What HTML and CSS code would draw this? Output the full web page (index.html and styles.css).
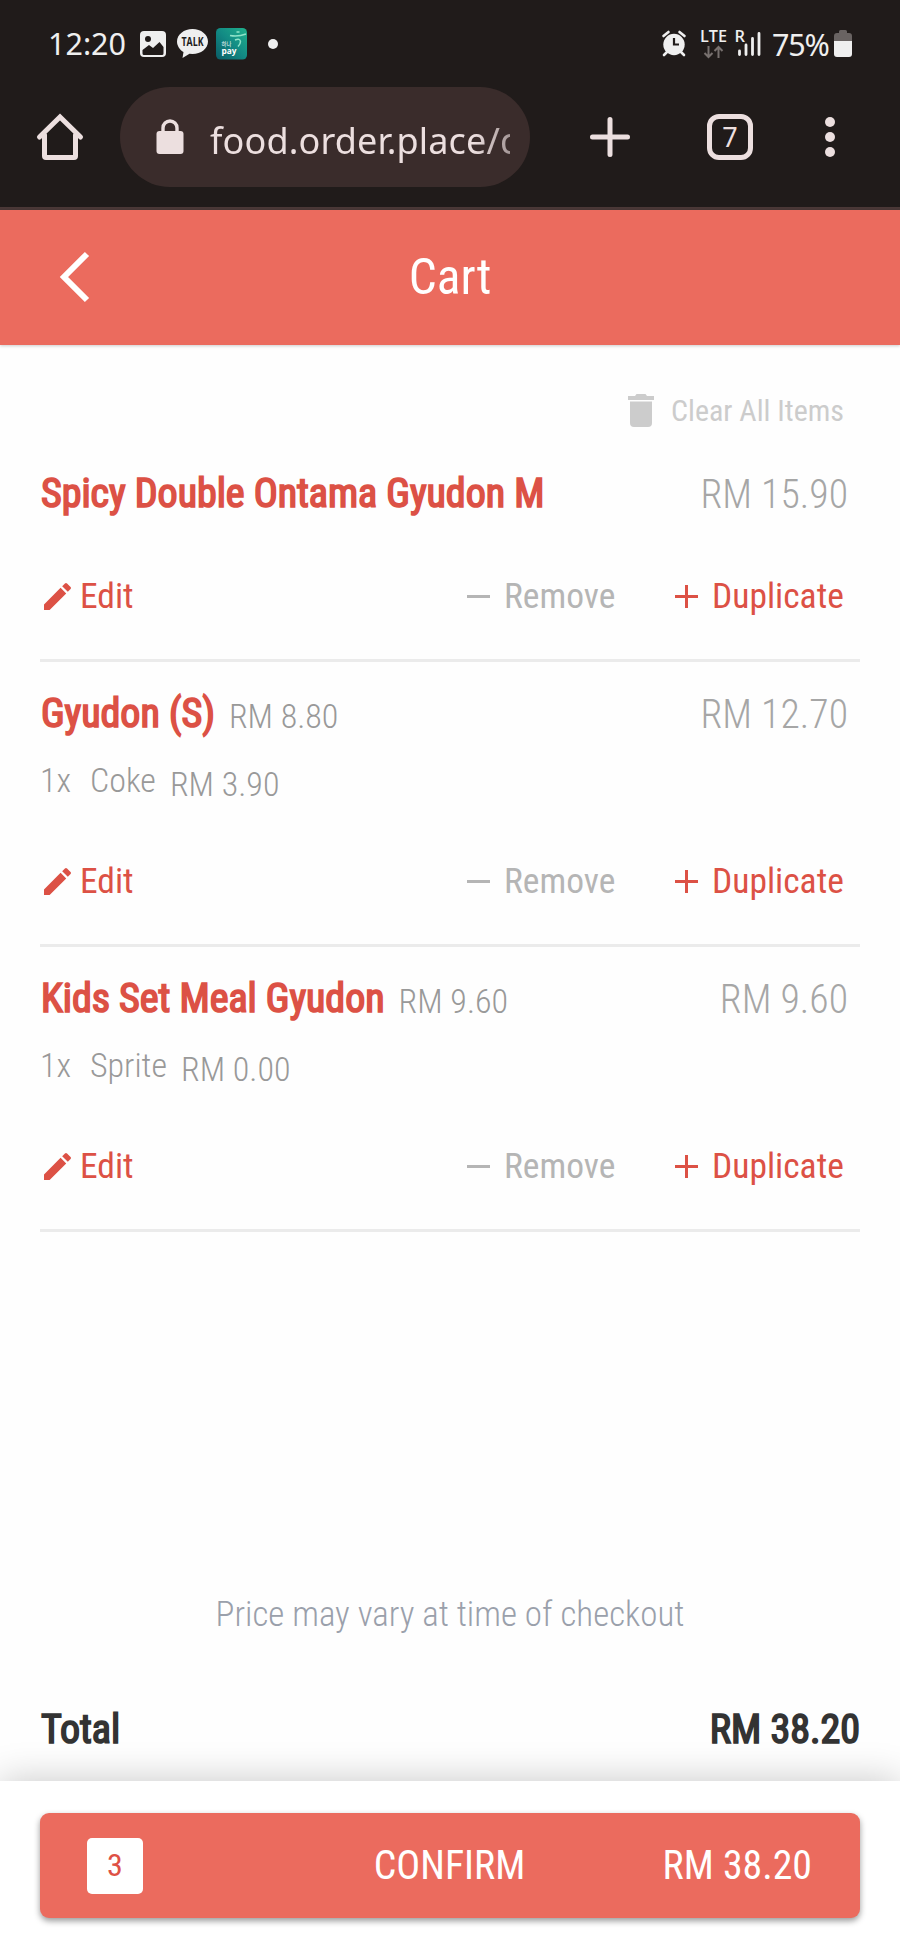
FILE: index.html
```html
<!DOCTYPE html>
<html lang="en">
<head>
<meta charset="utf-8">
<title>Cart</title>
<link rel="stylesheet" href="styles.css">
</head>
<body>
<div class="chrome">
  <div class="status">
    <span class="clock">12:20</span>
    <svg class="ic-photo" width="26" height="26" viewBox="0 0 26 26"><rect width="26" height="26" rx="4" fill="#efefef"/><circle cx="8" cy="8" r="3" fill="#201b1a"/><path d="M2.500 19l6.500-5 4 3 6.500-6 4 5v6.500a1.500 1.500 0 0 1-1.500 1.500H4a1.500 1.500 0 0 1-1.500-1.500z" fill="#201b1a"/></svg>
    <svg class="ic-talk" width="31" height="30" viewBox="0 0 31 30"><path d="M15.500 0C7 0 0 5.500 0 12.500c0 4.600 3 8.500 6.500 10.500L5.500 29l7-4.200 3 .2C24 25 31 19.500 31 12.500S24 0 15.500 0z" fill="#efefef"/><text x="4.500" y="17" textLength="22" lengthAdjust="spacingAndGlyphs" font-size="11.500" font-weight="700" fill="#201b1a">TALK</text></svg>
    <svg class="ic-pay" width="31" height="32" viewBox="0 0 31 32"><defs><linearGradient id="pay" x1="0" y1="1" x2="1" y2="0"><stop offset="0" stop-color="#0a5c66"/><stop offset=".5" stop-color="#128a84"/><stop offset="1" stop-color="#20b18c"/></linearGradient></defs><rect width="31" height="31.500" rx="4.500" fill="url(#pay)"/><path d="M14 7.500q8 1.500 16-1.500M19 12q5-2 5.500 1.500 0 2.500-2.500 5M20.500 4h3" fill="none" stroke="#8fe3c9" stroke-width="1.500"/><text x="5.500" y="17.500" textLength="10" lengthAdjust="spacingAndGlyphs" font-size="5.500" fill="#fff" class="kr">하나</text><text x="5.500" y="26" textLength="15" lengthAdjust="spacingAndGlyphs" font-size="9" font-weight="700" fill="#fff">pay</text></svg>
    <i class="more-dot"></i>
    <svg class="ic-alarm" width="24" height="26" viewBox="0 0 24 26"><circle cx="12" cy="13.500" r="10.700" fill="#efefef"/><path d="M1.500 5l5-4M22.500 5l-5-4M5 21l-3 3M19 21l3 3" stroke="#efefef" stroke-width="2.600" stroke-linecap="round"/><path d="M12 7v6.500h5" fill="none" stroke="#201b1a" stroke-width="2.200"/></svg>
    <svg class="ic-net" width="62" height="30" viewBox="0 0 62 30"><g font-weight="600" fill="#efefef"><text x="0" y="13" textLength="27" lengthAdjust="spacingAndGlyphs" font-size="16.500">LTE</text><text x="34.500" y="13" textLength="10.500" lengthAdjust="spacingAndGlyphs" font-size="16.500">R</text></g><path d="M8.500 17v10.500M4.500 24l4 4 4-4M18.500 29V18M14.500 22l4-4 4 4" fill="none" stroke="#77706e" stroke-width="2"/><path d="M39.500 22v3.500M46 16v9.500M52.500 9.500v16M59 4.500v21" stroke="#efefef" stroke-width="2.800" stroke-linecap="round"/></svg>
    <span class="percent">75%</span>
    <svg class="ic-batt" width="18" height="27" viewBox="0 0 18 27"><path d="M5 3V1.500Q5 0 6.500 0h5Q13 0 13 1.500V3h2q3 0 3 3v5H0V6q0-3 3-3z" fill="#696362"/><path d="M0 11h18v13q0 3-3 3H3q-3 0-3-3z" fill="#efefef"/></svg>
  </div>
  <div class="toolbar">
    <svg class="ic-home" width="48" height="48" viewBox="0 0 48 48"><path d="M3.500 24L24 4l20.500 20M8.500 22v21a1.500 1.500 0 0 0 1.500 1.500h28a1.500 1.500 0 0 0 1.500-1.500V22" fill="none" stroke="#ecdfdf" stroke-width="5" stroke-linecap="round"/></svg>
    <div class="omnibox">
      <svg width="28" height="36" viewBox="0 0 28 36"><path d="M7 13V9a7 7 0 0 1 14 0v4" fill="none" stroke="#ecdfdf" stroke-width="3.400"/><rect x=".5" y="12" width="27" height="23" rx="3" fill="#ecdfdf"/></svg>
      <span class="url">food.order.place/c</span>
    </div>
    <svg class="ic-plus" width="40" height="40" viewBox="0 0 40 40"><path d="M20 2.500v35M2.500 20h35" stroke="#ecdfdf" stroke-width="5" stroke-linecap="round"/></svg>
    <span class="tabs">7</span>
    <svg class="ic-dots" width="10" height="40" viewBox="0 0 10 40" fill="#ecdfdf"><circle cx="5" cy="5" r="5"/><circle cx="5" cy="20" r="5"/><circle cx="5" cy="35" r="5"/></svg>
  </div>
</div>
<header class="bar">
  <svg width="30" height="50" viewBox="0 0 30 50"><path d="M27 2L4 25l23 23" fill="none" stroke="#fff" stroke-width="6"/></svg>
  <h1>Cart</h1>
</header>
<main>
  <div class="clear">
    <svg width="26" height="33" viewBox="0 0 26 33" fill="#ccc"><path d="M0 2h7l1.500-2h9L19 2h7v4H0zM2 7.500h22V29q0 4-4 4H6q-4 0-4-4z"/></svg>
    <span>Clear All Items</span>
  </div>
  <section class="item">
    <div class="head"><h2>Spicy Double Ontama Gyudon M</h2><span class="price">RM 15.90</span></div>
    <div class="actions"><svg class="pencil" width="27" height="27" viewBox="3 3 18 18"><path d="M3 17.250V21h3.750L17.810 9.940l-3.750-3.750zM20.710 7.040a1 1 0 0 0 0-1.410l-2.340-2.340a1 1 0 0 0-1.410 0l-1.830 1.830 3.750 3.750z"/></svg><span class="edit">Edit</span><i class="minus"></i><span class="remove">Remove</span><i class="plus"></i><span class="dup">Duplicate</span></div>
  </section>
  <section class="item">
    <div class="head"><h2>Gyudon (S)</h2><span class="base">RM 8.80</span><span class="price">RM 12.70</span></div>
    <div class="option"><span class="qty">1x</span><span class="opt">Coke</span><span class="optprice">RM 3.90</span></div>
    <div class="actions"><svg class="pencil" width="27" height="27" viewBox="3 3 18 18"><path d="M3 17.250V21h3.750L17.810 9.940l-3.750-3.750zM20.710 7.040a1 1 0 0 0 0-1.410l-2.340-2.340a1 1 0 0 0-1.410 0l-1.830 1.830 3.750 3.750z"/></svg><span class="edit">Edit</span><i class="minus"></i><span class="remove">Remove</span><i class="plus"></i><span class="dup">Duplicate</span></div>
  </section>
  <section class="item">
    <div class="head"><h2>Kids Set Meal Gyudon</h2><span class="base">RM 9.60</span><span class="price">RM 9.60</span></div>
    <div class="option"><span class="qty">1x</span><span class="opt">Sprite</span><span class="optprice">RM 0.00</span></div>
    <div class="actions"><svg class="pencil" width="27" height="27" viewBox="3 3 18 18"><path d="M3 17.250V21h3.750L17.810 9.940l-3.750-3.750zM20.710 7.040a1 1 0 0 0 0-1.410l-2.340-2.340a1 1 0 0 0-1.410 0l-1.830 1.830 3.750 3.750z"/></svg><span class="edit">Edit</span><i class="minus"></i><span class="remove">Remove</span><i class="plus"></i><span class="dup">Duplicate</span></div>
  </section>
  <p class="note">Price may vary at time of checkout</p>
  <div class="total"><span>Total</span><span>RM 38.20</span></div>
</main>
<footer>
  <div class="confirm"><span class="count">3</span><span class="label">CONFIRM</span><span class="sum">RM 38.20</span></div>
</footer>
</body>
</html>
```
FILE: styles.css
```css
* { box-sizing: border-box; margin: 0; padding: 0; }
body {
  width: 900px; height: 1950px; overflow: hidden;
  display: flex; flex-direction: column;
  background: #fefefe;
  font-family: "Roboto Condensed", Roboto, sans-serif;
  font-stretch: 75%;
  white-space: nowrap;
}
svg { flex: none; display: block; overflow: visible; }
.chrome { height: 210px; background: #201b1a; border-bottom: 3px solid #4a3837; font-family: "Noto Sans", sans-serif; font-stretch: normal; }
.chrome svg { font-family: "Open Sans", sans-serif; }
.chrome .kr { font-family: "Noto Sans CJK KR", sans-serif; }
.status { height: 87px; display: flex; align-items: center; padding-left: 48px; color: #efefef; }
.clock { width: 92px; font-size: 30.5px; line-height: 38px; padding-bottom: 2px; }
.ic-photo { margin-right: 11px; }
.ic-talk { margin-right: 8px; }
.more-dot { width: 10px; height: 10px; border-radius: 50%; background: #efefef; margin-left: 21px; }
.ic-alarm { margin-left: 384px; }
.ic-net { margin-left: 14px; }
.percent { width: 62px; margin-left: 10px; font-size: 30.5px; letter-spacing: -1.2px; line-height: 40px; }
.toolbar { height: 100px; display: flex; align-items: center; padding-left: 36px; }
.omnibox { width: 410px; height: 100px; border-radius: 50px; background: #3a2c2b; margin-left: 36px; padding-left: 36px; display: flex; align-items: center; }
.url { width: 300px; margin-left: 26px; padding-top: 8px; overflow: hidden; font-size: 36px; letter-spacing: .15px; line-height: 50px; color: #ecdfdf; -webkit-mask-image: linear-gradient(90deg, #000 88%, rgba(0,0,0,.6)); mask-image: linear-gradient(90deg, #000 88%, rgba(0,0,0,.6)); }
.ic-plus { margin-left: 60px; }
.tabs { width: 46px; height: 46px; margin-left: 77px; border: 5px solid #ecdfdf; border-radius: 12px; text-align: center; font-size: 27px; line-height: 36px; color: #ecdfdf; }
.ic-dots { margin-left: 72px; }
.bar { position: relative; height: 135px; background: #eb6b5e; box-shadow: 0 1px 3px rgba(0,0,0,.2); display: flex; align-items: center; padding: 0 0 2px 60px; color: #fff; }
.bar h1 { width: 780px; margin-left: -30px; text-align: center; font-size: 49.5px; font-weight: 400; }
main { height: 1436px; padding: 45px 40px 0; }
.clear { height: 52px; padding: 0 16px 12px 0; display: flex; align-items: center; justify-content: flex-end; gap: 17px; font-size: 30px; color: #ccc; }
.item { padding: 22px 0 33px; border-bottom: 3px solid #ebebeb; }
.head { height: 60px; display: flex; align-items: center; padding: 0 12px 0 1px; }
h2 { font-size: 40px; line-height: 60px; font-weight: 400; letter-spacing: -.03px; -webkit-text-stroke: 1.7px #dc5145; color: #dc5145; }
.price { margin-left: auto; padding-top: 1px; font-size: 39.8px; font-weight: 300; color: #a6a6a6; }
.base { margin-left: 14px; padding-top: 3px; font-size: 34px; font-weight: 300; color: #999; }
.option { height: 54px; margin-top: 11px; display: flex; line-height: 50px; font-size: 34px; font-weight: 300; color: #999; }
.qty { width: 50px; }
.optprice { margin-left: 14px; padding-top: 4px; }
.actions { height: 60px; margin-top: 42px; display: flex; align-items: center; font-size: 35.5px; color: #dc5145; padding-left: 4px; }
.pencil { fill: #dc5145; }
.edit { margin-left: 9px; width: 54px; }
.minus { width: 23px; height: 3px; background: #b5b5b5; margin-left: 333px; }
.remove { width: 170px; padding-left: 14px; color: #b5b5b5; }
.plus { width: 23px; height: 23px; margin-left: 15px; background: linear-gradient(#dc5145, #dc5145) center / 100% 3px no-repeat, linear-gradient(#dc5145, #dc5145) center / 3px 100% no-repeat; }
.dup { margin-left: 14px; }
.note { margin-top: 353px; height: 60px; line-height: 60px; text-align: center; font-size: 35px; font-weight: 300; color: #9aa0ab; }
.total { margin-top: 54px; height: 60px; display: flex; justify-content: space-between; align-items: center; padding-left: 1px; font-size: 40px; -webkit-text-stroke: 1.7px #333; color: #333; }
footer { position: relative; flex: 1; padding: 32px 40px 0; background: #fff; box-shadow: 0 0 36px rgba(0,0,0,.22); }
.confirm { height: 105px; border-radius: 9px; background: #eb6b5e; box-shadow: 0 3px 6px rgba(0,0,0,.4); display: grid; grid-template-columns: 1fr 1fr 1fr; align-items: center; padding: 0 48px 0 47px; color: #fff; font-size: 39.8px; }
.count { width: 56px; height: 56px; border-radius: 5px; background: #fff; color: #de5145; text-align: center; font-size: 32px; line-height: 54px; }
.label { text-align: center; }
.sum { text-align: right; }
```
